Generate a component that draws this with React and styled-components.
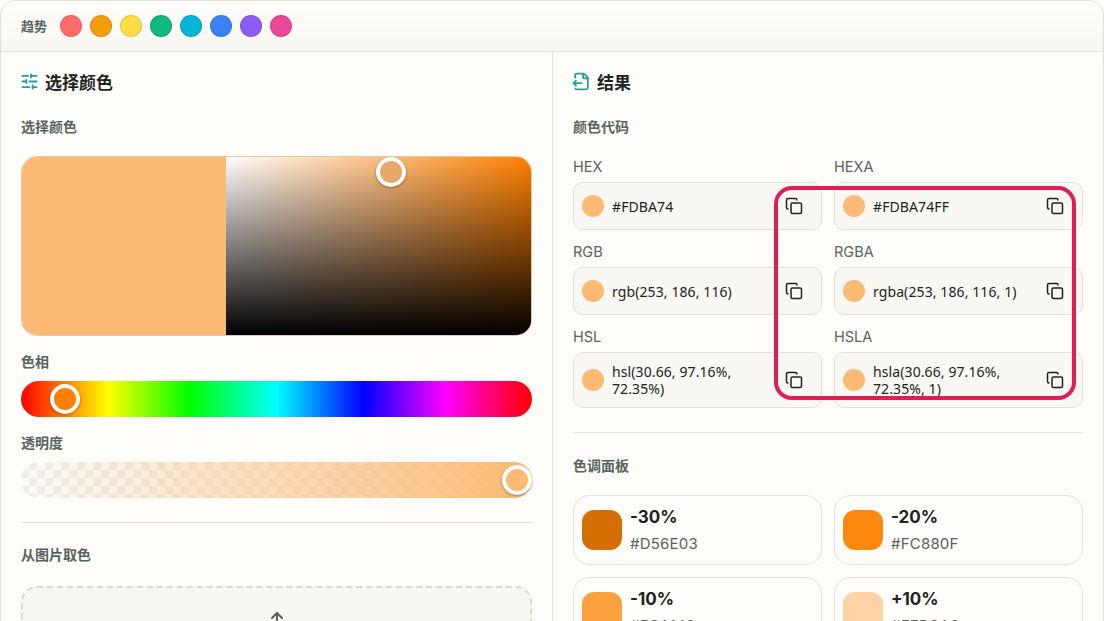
import React from 'react'
import styled, { createGlobalStyle } from 'styled-components'
import { SlidersHorizontal, FileOutput, Copy, Upload } from 'lucide-react'

const GlobalStyle = createGlobalStyle`
  html, body {
    margin: 0;
    height: 100%;
    overflow: hidden;
    background: #fffdf9;
    font-family: Inter, "Noto Sans CJK SC", sans-serif;
  }
  * { box-sizing: border-box; }
`

const Frame = styled.div`
  position: relative;
  width: 1104px;
  height: 621px;
  overflow: hidden;
  border: 1px solid #e3e0d6;
  border-bottom: 0;
  border-radius: 16px 16px 0 0;
  background: #fffdf9;
`

const TopBar = styled.div`
  display: flex;
  align-items: center;
  gap: 8px;
  height: 51px;
  padding-left: 20px;
  background: linear-gradient(180deg, #fffdf9, #f8f7f2);
  border-bottom: 1px solid #e3e0d6;
`

const TrendLabel = styled.span`
  font-size: 13px;
  font-weight: 700;
  color: #56645f;
  margin: 0 5px 2px 0;
`

const Dot = styled.span`
  width: 22px;
  height: 22px;
  border-radius: 50%;
  background: ${p => p.$color};
  border: 1px solid rgba(0, 0, 0, 0.1);
`

const Columns = styled.div`
  display: grid;
  grid-template-columns: 552px 1fr;
`

const LeftPanel = styled.div`
  padding: 17px 20px 0;
  border-right: 1px solid #e3e0d6;
  height: 570px;
`

const RightPanel = styled.div`
  padding: 17px 20px 0;
`

const PanelTitle = styled.h2`
  display: flex;
  align-items: center;
  gap: 6px;
  margin: 0 0 24px;
  height: 24px;
  font-size: 17px;
  font-weight: 700;
  color: #1c2321;
  svg {
    color: #2a9d9a;
    margin-left: -1px;
    stroke-width: 2.3;
  }
`

const SectionLabel = styled.div`
  height: 20px;
  line-height: 20px;
  font-size: 14px;
  font-weight: 700;
  color: #56645f;
  margin-top: ${p => p.$top || 0}px;
  margin-bottom: ${p => p.$gap ?? 19}px;
`

const Picker = styled.div`
  display: flex;
  height: 180px;
  border: 1px solid #e3c9a4;
  border-radius: 16px;
  overflow: hidden;
`

const PickerPreview = styled.div`
  width: 204px;
  background: #fdba74;
`

const PickerField = styled.div`
  position: relative;
  flex: 1;
  background:
    linear-gradient(to bottom, transparent, #000),
    linear-gradient(to right, #fff, #ff8000);
`

const Handle = styled.span`
  position: absolute;
  width: 30px;
  height: 30px;
  border-radius: 50%;
  border: 4px solid #fff;
  box-shadow: 0 1px 3px rgba(0, 0, 0, 0.35);
  background: ${p => p.$color};
  top: 50%;
  transform: translate(-50%, -50%);
`

const FieldHandle = styled(Handle)`
  left: 165px;
  top: 15px;
`

const Track = styled.div`
  position: relative;
  height: 36px;
  border-radius: 18px;
  margin-bottom: ${p => p.$gap || 0}px;
`

const HueTrack = styled(Track)`
  background: linear-gradient(to right, #f00 0%, #ff0 17%, #0f0 33%, #0ff 50%, #00f 67%, #f0f 83%, #f00 100%);
`

const AlphaTrack = styled(Track)`
  background:
    linear-gradient(to right, rgba(253, 186, 116, 0), #fdba74),
    repeating-conic-gradient(#eeeeec 0% 25%, #fffdf9 0% 50%) 0 0 / 16px 16px;
`

const HueHandle = styled(Handle)`
  left: 44px;
`

const AlphaHandle = styled(Handle)`
  left: 496px;
`

const Divider = styled.hr`
  border: 0;
  border-top: 1px solid #e3e0d6;
  margin: ${p => p.$margin};
`

const DropZone = styled.div`
  display: flex;
  justify-content: center;
  padding-top: 22px;
  height: 140px;
  border: 2px dashed #ddd8cc;
  border-radius: 16px;
  background: #f8f7f3;
  color: #56645f;
`

const CodeGrid = styled.div`
  display: grid;
  grid-template-columns: 249px 249px;
  column-gap: 12px;
  row-gap: 12px;
`

const CodeLabel = styled.div`
  height: 19px;
  line-height: 20px;
  margin-bottom: 6px;
  font-size: 14.5px;
  color: #56645f;
`

const CodeBox = styled.div`
  display: flex;
  align-items: center;
  gap: 8px;
  height: ${p => (p.$tall ? 56 : 48)}px;
  padding: 0 18px 0 8px;
  border: 1px solid #e3e0d6;
  border-radius: 10px;
  background: #f9f8f4;
`

const CodeDot = styled.span`
  flex: none;
  width: 22px;
  height: 22px;
  border-radius: 50%;
  background: #fdba74;
`

const CodeText = styled.span`
  flex: 1;
  font-family: "Noto Sans", "Noto Sans CJK SC", sans-serif;
  font-size: 14px;
  line-height: 17px;
  letter-spacing: 0.1px;
  color: #1c2321;
`

const CopyButton = styled.span`
  flex: none;
  display: flex;
  color: #1c2321;
`

const ShadeGrid = styled.div`
  display: grid;
  grid-template-columns: 249px 249px;
  gap: 12px;
`

const ShadeCard = styled.div`
  display: flex;
  gap: 8px;
  height: 70px;
  padding: 14px 8px;
  border: 1px solid #e3e0d6;
  border-radius: 16px;
`

const ShadeSwatch = styled.span`
  flex: none;
  width: 40px;
  height: 40px;
  border-radius: 12px;
  background: ${p => p.$color};
`

const ShadeInfo = styled.div`
  margin-top: -7px;
`

const ShadeName = styled.div`
  height: 28px;
  line-height: 28px;
  font-size: 17px;
  font-weight: 700;
  color: #1c2321;
`

const ShadeHex = styled.div`
  margin-top: 3px;
  font-size: 15px;
  line-height: 20px;
  letter-spacing: 0.2px;
  color: #56645f;
`

const Highlight = styled.div`
  position: absolute;
  left: 773px;
  top: 185px;
  width: 302px;
  height: 214px;
  border: 4px solid #e11d54;
  border-radius: 18px;
  pointer-events: none;
`

const trending = ['#ff6b6b', '#f59e0b', '#ffdd44', '#10b981', '#06b6d4', '#3b82f6', '#8b5cf6', '#ec4899']

const codes = [
  { name: 'HEX', value: '#FDBA74' },
  { name: 'HEXA', value: '#FDBA74FF' },
  { name: 'RGB', value: 'rgb(253, 186, 116)' },
  { name: 'RGBA', value: 'rgba(253, 186, 116, 1)' },
  { name: 'HSL', value: 'hsl(30.66, 97.16%, 72.35%)', tall: true },
  { name: 'HSLA', value: 'hsla(30.66, 97.16%, 72.35%, 1)', tall: true },
]

const shades = [
  { name: '-30%', hex: '#D56E03', color: '#d56e03' },
  { name: '-20%', hex: '#FC880F', color: '#fc880f' },
  { name: '-10%', hex: '#FCA140', color: '#fca140' },
  { name: '+10%', hex: '#FFD3A6', color: '#ffd3a6' },
]

const App = () => {
  return (
    <Frame>
      <GlobalStyle />
      <TopBar>
        <TrendLabel>趋势</TrendLabel>
        {trending.map(color => <Dot key={color} $color={color} />)}
      </TopBar>
      <Columns>
        <LeftPanel>
          <PanelTitle><SlidersHorizontal size={19} />选择颜色</PanelTitle>
          <SectionLabel $gap={19}>选择颜色</SectionLabel>
          <Picker>
            <PickerPreview />
            <PickerField><FieldHandle $color="#e8a968" /></PickerField>
          </Picker>
          <SectionLabel $top={16} $gap={9}>色相</SectionLabel>
          <HueTrack $gap={16}><HueHandle $color="#ff8000" /></HueTrack>
          <SectionLabel $gap={9}>透明度</SectionLabel>
          <AlphaTrack><AlphaHandle $color="#fdba74" /></AlphaTrack>
          <Divider $margin="24px 0 22px" />
          <SectionLabel $gap={21}>从图片取色</SectionLabel>
          <DropZone><Upload size={24} /></DropZone>
        </LeftPanel>
        <RightPanel>
          <PanelTitle><FileOutput size={19} />结果</PanelTitle>
          <SectionLabel $gap={20}>颜色代码</SectionLabel>
          <CodeGrid>
            {codes.map(code => (
              <div key={code.name}>
                <CodeLabel>{code.name}</CodeLabel>
                <CodeBox $tall={code.tall}>
                  <CodeDot />
                  <CodeText>{code.value}</CodeText>
                  <CopyButton><Copy size={18} /></CopyButton>
                </CodeBox>
              </div>
            ))}
          </CodeGrid>
          <Divider $margin="24px 0 23px" />
          <SectionLabel>色调面板</SectionLabel>
          <ShadeGrid>
            {shades.map(shade => (
              <ShadeCard key={shade.name}>
                <ShadeSwatch $color={shade.color} />
                <ShadeInfo>
                  <ShadeName>{shade.name}</ShadeName>
                  <ShadeHex>{shade.hex}</ShadeHex>
                </ShadeInfo>
              </ShadeCard>
            ))}
          </ShadeGrid>
        </RightPanel>
      </Columns>
      <Highlight />
    </Frame>
  )
}

export default App
